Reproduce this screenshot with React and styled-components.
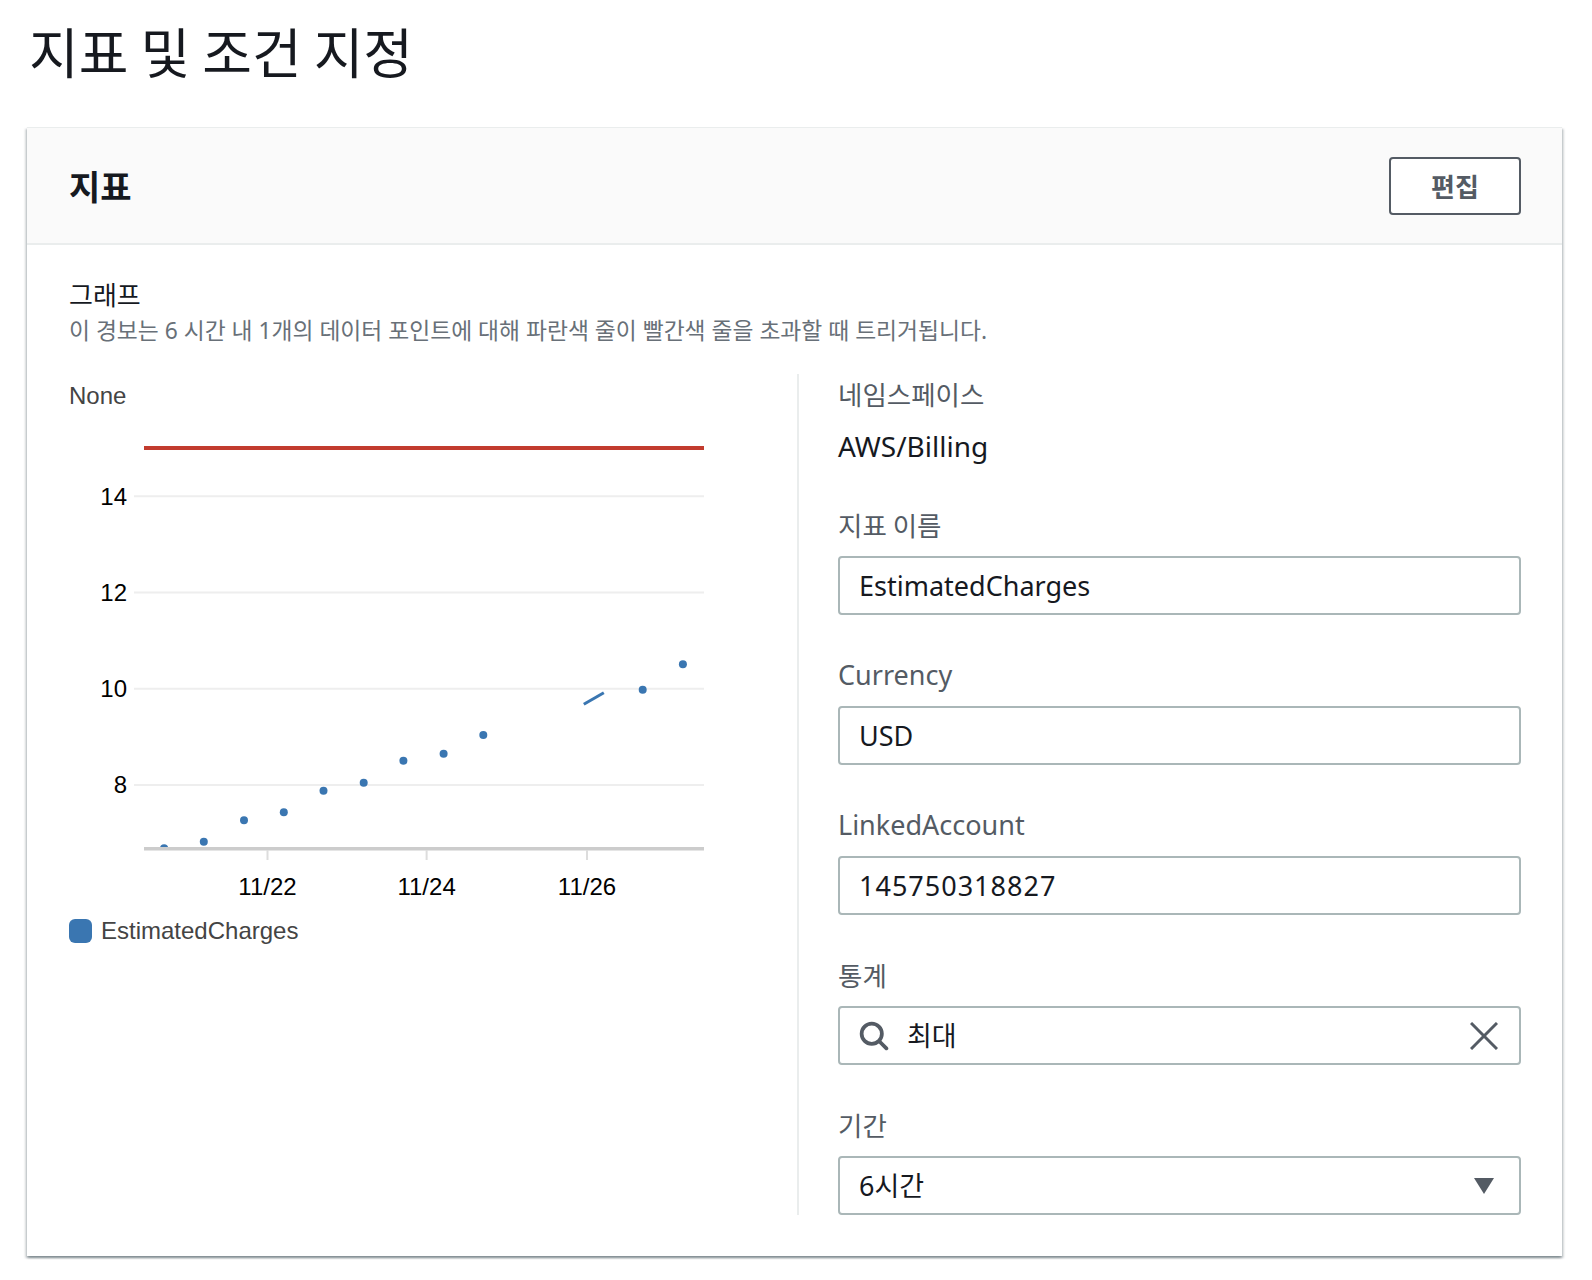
import styled, { createGlobalStyle } from 'styled-components';

const GlobalStyle = createGlobalStyle`
  html, body {
    margin: 0;
    padding: 0;
    background: #ffffff;
  }
  body {
    font-family: "Noto Sans", "Noto Sans CJK KR", sans-serif;
    color: #16191f;
  }
`;

const BLUE = '#3a76b1';

const points = [
  [164.1, 847.3], [203.8, 840.7], [244, 819.3], [283.8, 811.3], [323.5, 789.7],
  [363.7, 781.7], [403.4, 759.7], [443.6, 752.7], [483.3, 734], [642.7, 688.7], [682.9, 663.3],
];

const grid = [
  { label: '14', y: 495.3 },
  { label: '12', y: 591.5 },
  { label: '10', y: 687.7 },
  { label: '8', y: 783.9 },
];

const ticks = [
  { label: '11/22', x: 267.5 },
  { label: '11/24', x: 426.6 },
  { label: '11/26', x: 587 },
];

const SearchIcon = () => (
  <svg width="30" height="30" viewBox="0 0 16 16" fill="none" stroke="#545b64" strokeWidth="2" strokeLinecap="round">
    <circle cx="6.8" cy="6.8" r="5.4" />
    <line x1="10.8" y1="10.8" x2="14.6" y2="14.6" />
  </svg>
);

const ClearIcon = () => (
  <svg width="28" height="28" viewBox="0 0 28 28" fill="none" stroke="#545b64" strokeWidth="3">
    <line x1="1" y1="1" x2="27" y2="27" />
    <line x1="27" y1="1" x2="1" y2="27" />
  </svg>
);

const CaretIcon = () => (
  <svg width="20" height="16" viewBox="0 0 20 16">
    <polygon points="0,0 20,0 10,16" fill="#545b64" />
  </svg>
);

const MetricChart = () => (
  <Chart width="728" height="490" viewBox="69 410 728 490">
    <defs>
      <clipPath id="plot">
        <rect x="134" y="410" width="580" height="437" />
      </clipPath>
    </defs>
    {grid.map((g) => (
      <g key={g.label}>
        <line x1="134" x2="704" y1={g.y} y2={g.y} stroke="#eeeeee" strokeWidth="2" />
        <AxisText x="127" y={g.y + 8.5} textAnchor="end">{g.label}</AxisText>
      </g>
    ))}
    <rect x="144" y="445" width="560" height="4" fill="#c23b2e" />
    <g clipPath="url(#plot)">
      {points.map(([x, y]) => (
        <circle key={x} cx={x} cy={y} r="4" fill={BLUE} />
      ))}
      <line x1="583.8" y1="703.3" x2="603.8" y2="691.7" stroke={BLUE} strokeWidth="3" />
    </g>
    <rect x="144" y="846" width="560" height="3.5" fill="#cccccc" />
    {ticks.map((t) => (
      <g key={t.label}>
        <line x1={t.x} x2={t.x} y1="849" y2="859" stroke="#dddddd" strokeWidth="2" />
        <AxisText x={t.x} y="894" textAnchor="middle">{t.label}</AxisText>
      </g>
    ))}
  </Chart>
);

const App = () => {
  return (
    <>
      <GlobalStyle />
      <Page>
        <Title>지표 및 조건 지정</Title>
        <Card>
          <CardHeader>
            <CardTitle>지표</CardTitle>
            <EditButton>편집</EditButton>
          </CardHeader>
          <CardBody>
            <SectionLabel>그래프</SectionLabel>
            <Description>이 경보는 6 시간 내 1개의 데이터 포인트에 대해 파란색 줄이 빨간색 줄을 초과할 때 트리거됩니다.</Description>
            <Columns>
              <ChartColumn>
                <UnitLabel>None</UnitLabel>
                <MetricChart />
                <Legend>
                  <Swatch />
                  <LegendText>EstimatedCharges</LegendText>
                </Legend>
              </ChartColumn>
              <FieldColumn>
                <FieldLabel $ko>네임스페이스</FieldLabel>
                <StaticValue>AWS/Billing</StaticValue>
                <FieldList>
                  <Field>
                    <FieldLabel $ko>지표 이름</FieldLabel>
                    <InputBox>
                      <InputText>EstimatedCharges</InputText>
                    </InputBox>
                  </Field>
                  <Field>
                    <FieldLabel>Currency</FieldLabel>
                    <InputBox>
                      <InputText>USD</InputText>
                    </InputBox>
                  </Field>
                  <Field>
                    <FieldLabel>LinkedAccount</FieldLabel>
                    <InputBox>
                      <InputText $digits>145750318827</InputText>
                    </InputBox>
                  </Field>
                  <Field>
                    <FieldLabel $ko>통계</FieldLabel>
                    <InputBox>
                      <SearchIcon />
                      <InputText>최대</InputText>
                      <ClearIcon />
                    </InputBox>
                  </Field>
                  <Field>
                    <FieldLabel $ko>기간</FieldLabel>
                    <InputBox $select>
                      <InputText>6시간</InputText>
                      <CaretIcon />
                    </InputBox>
                  </Field>
                </FieldList>
              </FieldColumn>
            </Columns>
          </CardBody>
        </Card>
      </Page>
    </>
  );
};

const Page = styled.div`
  padding: 19px 30px 40px 27px;
`;

const Title = styled.h1`
  margin: 0 0 44px 2px;
  font-family: "Noto Sans CJK KR", sans-serif;
  font-size: 54px;
  line-height: 64px;
  font-weight: 400;
  color: #16191f;
`;

const Card = styled.section`
  width: 1535px;
  background: #ffffff;
  border-top: 1px solid #eaeded;
  box-shadow: 0 2px 2px 0 rgba(0, 28, 36, 0.3), 2px 2px 2px 0 rgba(0, 28, 36, 0.15),
    -2px 2px 2px 0 rgba(0, 28, 36, 0.15);
`;

const CardHeader = styled.header`
  height: 115px;
  display: flex;
  align-items: center;
  justify-content: space-between;
  padding: 0 41px 0 42px;
  background: #fafafa;
  border-bottom: 2px solid #eaeded;
`;

const CardTitle = styled.h2`
  margin: 0;
  font-family: "Noto Sans CJK KR", sans-serif;
  font-size: 34px;
  font-weight: 700;
  color: #16191f;
`;

const EditButton = styled.button`
  width: 132px;
  height: 58px;
  border: 2px solid #545b64;
  border-radius: 4px;
  background: #ffffff;
  font-family: "Noto Sans CJK KR", sans-serif;
  font-size: 26px;
  font-weight: 700;
  color: #545b64;
  padding: 0;
`;

const CardBody = styled.div`
  padding: 32px 41px 41px 42px;
`;

const SectionLabel = styled.div`
  font-family: "Noto Sans CJK KR", sans-serif;
  font-size: 26px;
  line-height: 34px;
  color: #16191f;
`;

const Description = styled.p`
  margin: 5px 0 0;
  font-family: "Noto Sans", "Noto Sans CJK KR", sans-serif;
  font-size: 22.8px;
  line-height: 30px;
  color: #687078;
`;

const Columns = styled.div`
  display: flex;
  margin-top: 28px;
`;

const ChartColumn = styled.div`
  width: 728px;
  flex: none;
  padding-top: 7px;
  border-right: 2px solid #eaeded;
`;

const UnitLabel = styled.div`
  font-family: "Liberation Sans", Arial, sans-serif;
  font-size: 24px;
  line-height: 30px;
  color: #444444;
`;

const Chart = styled.svg`
  display: block;
  overflow: visible;
`;

const AxisText = styled.text`
  font-family: "Liberation Sans", Arial, sans-serif;
  font-size: 24px;
  fill: #000000;
`;

const Legend = styled.div`
  display: flex;
  align-items: center;
  gap: 9px;
  margin-top: 18px;
`;

const Swatch = styled.span`
  width: 23px;
  height: 24px;
  border-radius: 6px;
  background: ${BLUE};
`;

const LegendText = styled.span`
  font-family: "Liberation Sans", Arial, sans-serif;
  font-size: 24px;
  line-height: 24px;
  color: #444444;
`;

const FieldColumn = styled.div`
  flex: 1;
  padding-left: 39px;
  padding-top: 2px;
`;

const FieldLabel = styled.div`
  font-family: ${(p) => (p.$ko ? '"Noto Sans CJK KR"' : '"Noto Sans", "Noto Sans CJK KR"')}, sans-serif;
  font-size: ${(p) => (p.$ko ? '26.5px' : '27px')};
  line-height: 36px;
  color: #545b64;
`;

const StaticValue = styled.div`
  margin-top: 16px;
  font-size: 28px;
  line-height: 36px;
  color: #16191f;
`;

const FieldList = styled.div`
  display: flex;
  flex-direction: column;
  gap: 42px;
  margin-top: 43px;
`;

const Field = styled.div`
  display: flex;
  flex-direction: column;
  gap: 13px;
`;

const InputBox = styled.div`
  box-sizing: border-box;
  height: 59px;
  display: flex;
  align-items: center;
  gap: 18px;
  padding: 0 ${(p) => (p.$select ? '25px' : '21px')} 0 19px;
  border: 2px solid #aab7b8;
  border-radius: 4px;
  background: #ffffff;
`;

const InputText = styled.span`
  flex: 1;
  font-family: "Noto Sans", "Noto Sans CJK KR", sans-serif;
  font-size: 27px;
  line-height: 36px;
  letter-spacing: ${(p) => (p.$digits ? '1px' : 'normal')};
  color: #16191f;
`;

export default App;
